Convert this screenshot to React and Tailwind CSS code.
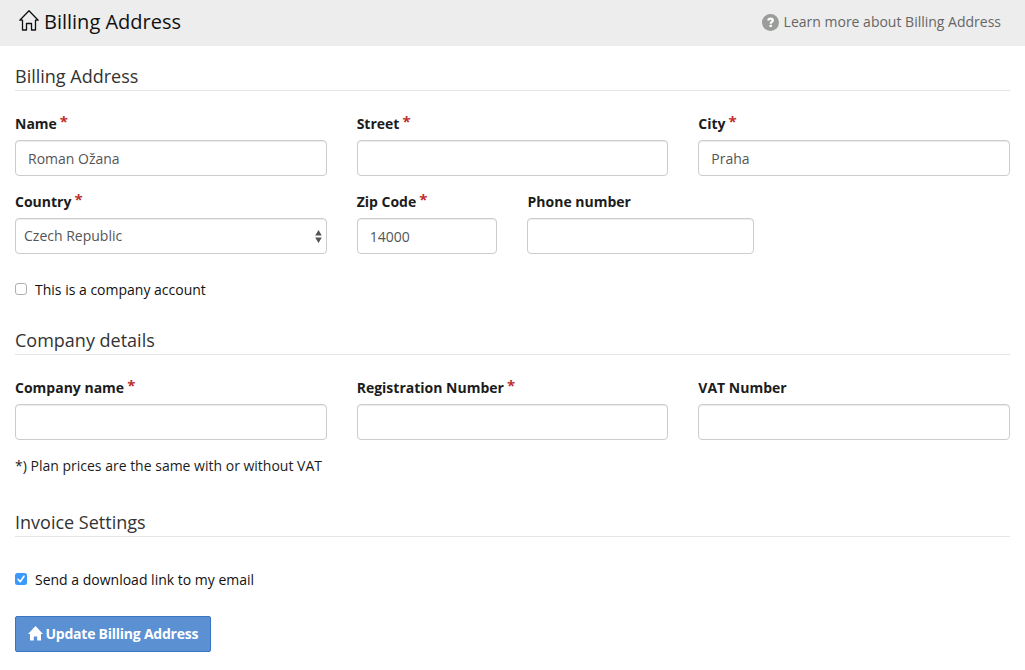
import React from "react";

const inputClass =
  "block h-9 w-full rounded border border-[#cccccc] bg-white px-3 text-sm text-[#555555] shadow-[inset_0_1px_1px_rgba(0,0,0,0.075)] outline-none";

function Label({ htmlFor, required, children }) {
  return (
    <label htmlFor={htmlFor} className="flex h-[26px] gap-[3px] text-sm leading-5 font-bold text-[#1c1c1c]">
      <span>{children}</span>
      {required && <span className="-mt-[3px] text-[15px] leading-5 text-[#c12e2a]">*</span>}
    </label>
  );
}

function Field({ id, label, required, value = "", className }) {
  return (
    <div className={className}>
      <Label htmlFor={id} required={required}>{label}</Label>
      <input id={id} type="text" defaultValue={value} className={inputClass} />
    </div>
  );
}

function SectionTitle({ children }) {
  return (
    <h2 className="h-[26px] border-b border-[#e5e5e5] text-lg leading-[22px] text-[#333333]">{children}</h2>
  );
}

function Checkbox({ checked, children }) {
  return (
    <label className="flex h-5 items-center text-sm leading-5 text-[#111111]">
      <input type="checkbox" defaultChecked={checked} className="peer sr-only" />
      {checked ? (
        <svg viewBox="0 0 12 12" className="mr-2 mb-0.5 h-3 w-3 shrink-0">
          <rect width="12" height="12" rx="2.5" fill="#3b99fc" />
          <path d="M3 6.3 5.2 8.7 9 3.2" fill="none" stroke="#fff" strokeWidth="1.6" strokeLinecap="round" strokeLinejoin="round" />
        </svg>
      ) : (
        <span className="mr-2 mb-0.5 h-3 w-3 shrink-0 rounded-[3px] border border-[#b0b0b0] bg-white" />
      )}
      <span>{children}</span>
    </label>
  );
}

export default function App() {
  return (
    <div className="h-[670px] w-[1025px] overflow-hidden bg-white font-['Open_Sans',sans-serif] text-sm text-[#1c1c1c]">
      <header className="flex h-[46px] items-center justify-between bg-[#ededed] pr-6 pl-[19px]">
        <div className="flex items-center pb-1">
          <svg viewBox="0 0 20 21" className="mb-px h-[21px] w-5" fill="none" stroke="#111" strokeWidth="1.3" strokeLinejoin="round" strokeLinecap="round">
            <path d="M3.500 10.200H.8L10 .8l9.200 9.400h-2.700v9.800h-4v-6.500h-5V20h-4z" />
          </svg>
          <h1 className="mt-0.5 ml-[5px] text-xl leading-6 text-[#111111]">Billing Address</h1>
        </div>
        <a className="flex items-center pb-[3px] text-sm leading-5 text-[#666666]">
          <svg viewBox="0 0 17 17" className="mt-px mr-[5px] h-[17px] w-[17px]">
            <circle cx="8.500" cy="8.500" r="8.500" fill="#999c99" />
            <path d="M6.200 6.500C6.400 5.200 7.300 4.700 8.600 4.700s2.200.6 2.200 1.700c0 1.500-2.100 1.400-2.100 3.300" fill="none" stroke="#fff" strokeWidth="2.200" />
            <path d="M7.500 10.800h2.400v2.200H7.500z" fill="#fff" />
          </svg>
          Learn more about Billing Address
        </a>
      </header>

      <main className="px-[15px] pt-[19px]">
        <SectionTitle>Billing Address</SectionTitle>
        <div className="mt-[23px] grid grid-cols-12 gap-x-[30px] gap-y-4">
          <Field id="name" label="Name" required value="Roman Ožana" className="col-span-4" />
          <Field id="street" label="Street" required className="col-span-4" />
          <Field id="city" label="City" required value="Praha" className="col-span-4" />
          <div className="col-span-4">
            <Label htmlFor="country" required>Country</Label>
            <button id="country" type="button" className="flex h-9 w-full items-center justify-between rounded border border-[#cccccc] bg-white pr-1 pl-2 text-sm text-[#555555] shadow-[inset_0_1px_1px_rgba(0,0,0,0.075)]">
              Czech Republic
              <svg viewBox="0 0 7 13" className="h-[13px] w-[7px]" fill="#555">
                <path d="M3.500 0 6.800 5.500H.2zM3.500 13l3.300-5.500H.2z" />
              </svg>
            </button>
          </div>
          <div className="col-span-5 flex gap-[30px]">
            <Field id="zip" label="Zip Code" required value="14000" className="w-[140.400px]" />
            <Field id="phone" label={<span className="pl-[0.500px]">Phone number</span>} className="w-[226.600px]" />
          </div>
        </div>
        <div className="mt-[26px]">
          <Checkbox>This is a company account</Checkbox>
        </div>

        <div className="mt-[29px]">
          <SectionTitle>Company details</SectionTitle>
        </div>
        <div className="mt-[23px] grid grid-cols-12 gap-x-[30px]">
          <Field id="company" label="Company name" required className="col-span-4" />
          <Field id="registration" label="Registration Number" required className="col-span-4" />
          <Field id="vat" label="VAT Number" className="col-span-4" />
        </div>
        <p className="mt-4 text-sm leading-5">*) Plan prices are the same with or without VAT</p>

        <div className="mt-[35px]">
          <SectionTitle>Invoice Settings</SectionTitle>
        </div>
        <div className="mt-[33px]">
          <Checkbox checked>Send a download link to my email</Checkbox>
        </div>
        <button type="button" className="mt-[26px] flex h-9 w-[196px] items-center rounded-[2px] border border-[#3a76c4] bg-[#5b90d3] pl-3 text-sm font-bold text-white">
          <svg viewBox="0 0 15 15" className="mr-[3px] mb-0.5 h-[15px] w-[15px] shrink-0" fill="#fff">
            <path d="M7.500 0 15 8h-2v6.500H9.200v-4H5.800v4H2V8H0z" />
          </svg>
          <span className="-ml-[0.500px] tracking-[-0.24px] whitespace-nowrap">Update Billing Address</span>
        </button>
      </main>
    </div>
  );
}
